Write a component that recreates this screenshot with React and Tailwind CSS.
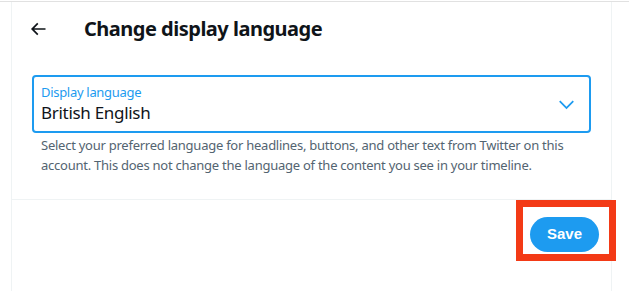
export default function App() {
  return (
    <div className="relative h-[291px] w-[629px] overflow-hidden bg-white font-['Noto_Sans',sans-serif] text-[#0f1419]">
      <div className="mt-px border-t border-[#e1e1e1]" />
      <div className="ml-[11px] flex h-[289px] w-[601px] flex-col border-x border-[#eff3f4]">
        {/* header */}
        <div className="flex h-[54px] items-center">
          <button className="ml-[16px] flex h-[20px] w-[20px] items-center justify-center">
            <svg viewBox="0 0 24 24" className="h-[20px] w-[20px] fill-[#0f1419]">
              <path d="M7.414 13l5.043 5.04-1.414 1.42L3.586 12l7.457-7.46 1.414 1.42L7.414 11H21v2H7.414z" />
            </svg>
          </button>
          <h2 className="ml-[36px] text-[20px] font-bold leading-[24px] tracking-[-0.5px]">Change display language</h2>
        </div>

        {/* select */}
        <div className="px-[20px] pt-[19px]">
          <div className="flex h-[58px] items-center rounded-[4px] border-2 border-[#1d9bf0] pl-[7px] pr-[12px]">
            <div className="flex flex-1 flex-col pt-[1px]">
              <span className="text-[13px] leading-[16px] tracking-[-0.3px] text-[#1d9bf0]">Display language</span>
              <span className="mt-[1px] text-[17px] leading-[24px] tracking-[-0.3px]">British English</span>
            </div>
            <svg viewBox="0 0 24 24" className="h-[21px] w-[21px] fill-[#1d9bf0]">
              <path d="M3.543 8.96l1.414-1.42L12 14.59l7.043-7.05 1.414 1.42L12 17.41 3.543 8.96z" />
            </svg>
          </div>
          <p className="mt-[2px] pl-[9px] pr-[4px] text-[13px] leading-[20px] tracking-[-0.25px] text-[#536471]">
            Select your preferred language for headlines, buttons, and other text from Twitter on this account. This does not change the language of the content you see in your timeline.
          </p>
        </div>

        <div className="mt-[24px] border-b border-[#eff3f4]" />

        <div className="flex justify-end pr-[12px] pt-[17px]">
          <button className="h-[35px] w-[69px] rounded-full bg-[#1d9bf0] font-['Liberation_Sans',sans-serif] text-[15px] font-bold text-white">
            Save
          </button>
        </div>
      </div>

      {/* annotation */}
      <div className="absolute left-[516px] top-[200px] h-[61px] w-[100px] border-[7px] border-[#f33a16]" />
    </div>
  );
}
